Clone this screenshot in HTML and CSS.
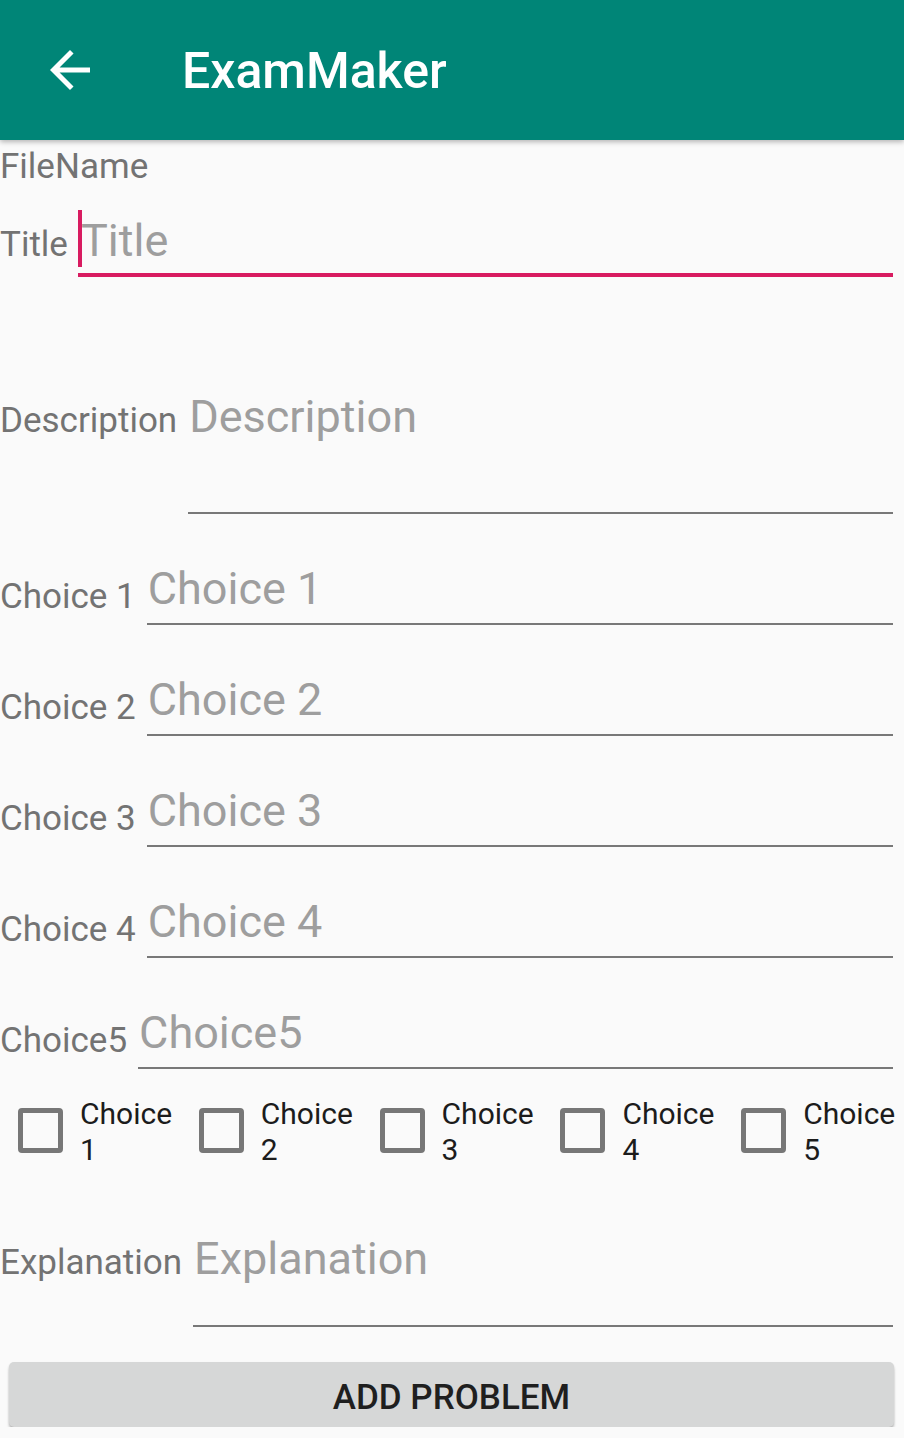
FILE: index.html
```html
<!DOCTYPE html>
<html lang="en">
<head>
<meta charset="utf-8">
<title>ExamMaker</title>
<link rel="stylesheet" href="styles.css">
</head>
<body>
<header class="appbar">
  <svg class="back" viewBox="0 0 24 24" width="60" height="60"><path fill="#fff" d="M20 11H7.83l5.59-5.59L12 4l-8 8 8 8 1.41-1.41L7.83 13H20v-2z"/></svg>
  <h1 class="appbar-title">ExamMaker</h1>
</header>
<main class="form">
  <div class="filename">FileName</div>

  <div class="row row-title">
    <span class="label">Title</span>
    <div class="field field-focused"><span class="caret"></span><span class="hint">Title</span></div>
  </div>

  <div class="row row-desc">
    <span class="label">Description</span>
    <div class="field field-tall"><span class="hint">Description</span></div>
  </div>

  <div class="row row-choice">
    <span class="label">Choice 1</span>
    <div class="field"><span class="hint">Choice 1</span></div>
  </div>
  <div class="row row-choice">
    <span class="label">Choice 2</span>
    <div class="field"><span class="hint">Choice 2</span></div>
  </div>
  <div class="row row-choice">
    <span class="label">Choice 3</span>
    <div class="field"><span class="hint">Choice 3</span></div>
  </div>
  <div class="row row-choice">
    <span class="label">Choice 4</span>
    <div class="field"><span class="hint">Choice 4</span></div>
  </div>
  <div class="row row-choice">
    <span class="label">Choice5</span>
    <div class="field"><span class="hint">Choice5</span></div>
  </div>

  <div class="checks">
    <label class="check"><span class="box"></span><span class="check-text">Choice 1</span></label>
    <label class="check"><span class="box"></span><span class="check-text">Choice 2</span></label>
    <label class="check"><span class="box"></span><span class="check-text">Choice 3</span></label>
    <label class="check"><span class="box"></span><span class="check-text">Choice 4</span></label>
    <label class="check"><span class="box"></span><span class="check-text">Choice 5</span></label>
  </div>

  <div class="row row-expl">
    <span class="label">Explanation</span>
    <div class="field field-expl"><span class="hint">Explanation</span></div>
  </div>

  <button class="add-btn">ADD PROBLEM</button>
</main>
</body>
</html>
```
FILE: styles.css
```css
html, body {
  margin: 0;
  padding: 0;
  background: #fafafa;
  font-family: Roboto, "Noto Sans", sans-serif;
}

.appbar {
  height: 140px;
  background: #008577;
  display: flex;
  align-items: center;
  box-shadow: 0 2px 5px rgba(0, 0, 0, 0.28);
  position: relative;
  z-index: 1;
}

.back {
  display: block;
  margin-left: 40px;
  flex: none;
}

.appbar-title {
  margin: 2px 0 0 82px;
  color: #fff;
  font-size: 50px;
  font-weight: 500;
  line-height: 60px;
}

.form {
  display: flex;
  flex-direction: column;
  padding-right: 11px;
}

.filename {
  margin-top: 6px;
  font-size: 35px;
  line-height: 41px;
  color: #737373;
}

.row {
  display: flex;
  align-items: baseline;
}

.label {
  font-size: 35px;
  line-height: 41px;
  color: #737373;
  margin-right: 11px;
  white-space: nowrap;
}

.row-choice .label {
  position: relative;
  top: 4px;
}

.field {
  flex: 1;
  min-width: 0;
  font-size: 45px;
  line-height: 53px;
  padding-bottom: 8px;
  border-bottom: 2px solid #787878;
  position: relative;
}

.hint {
  color: #9e9e9e;
  padding-left: 1px;
}

.row-title { margin-top: 27px; }
.field-focused {
  margin-left: -1px;
  padding-bottom: 6px;
  border-bottom: 4px solid #d81b60;
}
.caret {
  position: absolute;
  left: 0;
  top: -4px;
  width: 4px;
  height: 57px;
  background: #d81b60;
}
.field-focused .hint { padding-left: 3px; }

.row-desc { margin-top: 113px; }
.field-tall { padding-bottom: 69px; }

.row-choice { margin-top: 48px; }

.checks {
  margin-top: 27px;
  margin-right: -11px;
  display: grid;
  grid-template-columns: repeat(5, 1fr);
  height: 72px;
}

.check {
  display: flex;
  align-items: center;
  padding-left: 18px;
  min-width: 0;
}

.box {
  flex: none;
  width: 45px;
  height: 45px;
  box-sizing: border-box;
  border: 5px solid #777;
  border-radius: 4px;
  margin-right: 17px;
  margin-bottom: 3px;
}

.check-text {
  flex: 1;
  min-width: 0;
  font-size: 30px;
  line-height: 36px;
  color: #1c1c1c;
}

.row-expl { margin-top: 64px; }
.field-expl { padding-bottom: 40px; }

.add-btn {
  margin: 35px 0 0 9px;
  width: 885px;
  height: 65px;
  border: none;
  border-radius: 5px;
  background: #d6d7d7;
  color: #1f1f1f;
  font-family: Roboto, "Noto Sans", sans-serif;
  font-size: 35px;
  font-weight: 500;
  line-height: 41px;
  padding: 5px 0 0;
  box-shadow: 0 3px 3px rgba(0, 0, 0, 0.2), 0 1px 2px rgba(0, 0, 0, 0.12);
}
```
